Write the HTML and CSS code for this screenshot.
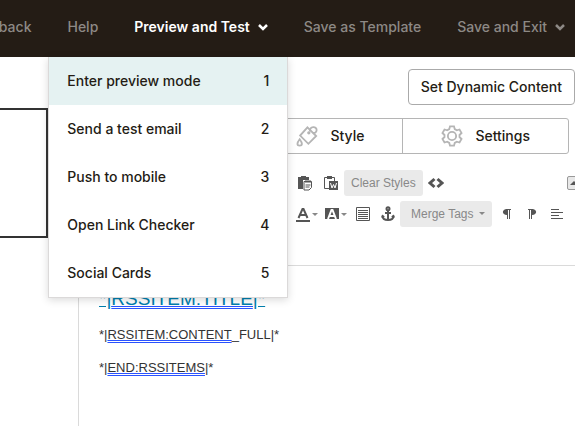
FILE: index.html
```
<!DOCTYPE html>
<html lang="en">
<head>
<meta charset="utf-8">
<title>Campaign editor</title>
<link rel="stylesheet" href="styles.css">
</head>
<body>
<header class="topbar">
  <nav class="topnav" aria-label="Campaign">
    <a class="nav-link" href="#">back</a>
    <a class="nav-link" href="#">Help</a>
    <div class="nav-group">
      <button class="nav-link active" type="button" aria-expanded="true">Preview and Test
        <svg class="chevron" viewBox="0 0 10 8"><path d="M1 2l4 4 4-4"/></svg></button>
      <ul class="menu">
        <li><a class="menu-item current" href="#"><span>Enter preview mode</span><span>1</span></a></li>
        <li><a class="menu-item" href="#"><span>Send a test email</span><span>2</span></a></li>
        <li><a class="menu-item" href="#"><span>Push to mobile</span><span>3</span></a></li>
        <li><a class="menu-item" href="#"><span>Open Link Checker</span><span>4</span></a></li>
        <li><a class="menu-item" href="#"><span>Social Cards</span><span>5</span></a></li>
      </ul>
    </div>
    <a class="nav-link" href="#">Save as Template</a>
    <button class="nav-link" type="button">Save and Exit
      <svg class="chevron" viewBox="0 0 10 8"><path d="M1 2l4 4 4-4"/></svg></button>
  </nav>
</header>
<main class="workspace">
  <section class="canvas" aria-label="Preview"><div class="block"></div></section>
  <section class="editor" aria-label="Content editor">
    <div class="actions"><button class="dynamic" type="button">Set Dynamic Content</button></div>
    <div class="tabs">
      <button class="tab" type="button" aria-label="Content"></button>
      <button class="tab" type="button">
        <svg class="tab-icon" viewBox="0 0 24 24"><path d="M12.500 2.500L22 12l-8.500 8.500L4.500 11.500z"/><path d="M15 7c0-6 7.500-6 7.500-1.500 0 2.500-2 3.500-4 3"/><circle class="dot" cx="14" cy="8.500" r="1.800"/><path d="M4 15.500c-3.500 4.500-3 7 0 7s3.500-2.500 0-7z"/></svg>Style</button>
      <button class="tab" type="button">
        <svg class="tab-icon" viewBox="0 0 24 24"><circle cx="12" cy="12" r="4.500"/><path d="M9.800 1.500h4.400l.8 3 2.200 1.300 3-.9 2.200 3.800-2.200 2.200v2.200l2.200 2.200-2.200 3.800-3-.9-2.200 1.300-.8 3H9.800l-.8-3-2.200-1.300-3 .9-2.200-3.800 2.200-2.200v-2.200L1.600 8.700l2.200-3.800 3 .9L9 4.500z"/></svg>Settings</button>
    </div>
    <div class="toolbar">
      <div class="tools spaced">
        <button class="tool" type="button" aria-label="Paste as text"><svg viewBox="0 0 16 16"><path class="fill" d="M1 2h3V1h5v1h3v3H6v9H1z"/><path d="M7 6.500h7.500v6L12 15H7zM9 5v3M11 5v3M13 5v3M8.500 10h5M8.500 12h4"/></svg></button>
        <button class="tool" type="button" aria-label="Paste from Word"><svg viewBox="0 0 16 16"><path d="M6 13.500H1.500v-11h10V6"/><path class="fill" d="M4 1h5v3H4zM6 6h9v9H6z"/><path class="light" d="M7.500 8l1.500 5 1.500-3.500L12 13l1.500-5"/></svg></button>
        <button class="pill" type="button">Clear Styles</button>
        <button class="tool" type="button" aria-label="Source"><svg viewBox="0 0 16 16"><path class="bold" d="M6.500 4L2 8l4.500 4M9.500 4L14 8l-4.500 4"/></svg></button>
        <button class="collapse" type="button" aria-label="Collapse toolbar"><svg viewBox="0 0 10 8"><path class="fill" d="M1 6l4-4 4 4z"/></svg></button>
      </div>
      <div class="tools">
        <button class="tool wide" type="button" aria-label="Text colour"><svg viewBox="0 0 24 16"><path class="fill" d="M1 14h14v2H1z"/><path class="thick" d="M3.500 12L7.500 3h1l4 9M5.500 9h5.500"/><path class="caret" d="M17 7h6l-3 3z"/></svg></button>
        <button class="tool wide" type="button" aria-label="Background colour"><svg viewBox="0 0 24 16"><path class="fill" d="M1 2h14v11H1z"/><path class="light thick" d="M4 13L7.500 4h1l3.500 9M5.500 10h5"/><path class="caret" d="M17 7h6l-3 3z"/></svg></button>
        <button class="tool" type="button" aria-label="Block style"><svg viewBox="0 0 16 16"><path d="M1.500 1.500h13v13h-13zM3 4.500h10M3 6.500h10M3 8.500h10M3 10.500h10M3 12.500h10"/></svg></button>
        <button class="tool" type="button" aria-label="Anchor"><svg viewBox="0 0 16 16"><circle class="thick" cx="8" cy="2.800" r="1.500"/><path class="thick" d="M8 4.500V14M5 7h6M2.500 9.500c0 3 2 4.500 5.500 4.500s5.500-1.500 5.500-4.500"/><path class="fill" d="M1 11.500l1.500-3L5 11zM15 11.500l-1.500-3L11 11z"/></svg></button>
        <button class="pill merge" type="button">Merge Tags <svg class="small" viewBox="0 0 6 4"><path class="caret" d="M0 0h6L3 3z"/></svg></button>
        <button class="tool" type="button" aria-label="Left to right"><svg viewBox="0 0 16 16"><path class="fill" d="M8 3v6C2.500 9 2.500 3 8 3z"/><path d="M7 3.500h5M8.500 3v10M10.500 3v10"/></svg></button>
        <button class="tool" type="button" aria-label="Right to left"><svg viewBox="0 0 16 16"><path class="fill" d="M8 3v6c5.500 0 5.500-6 0-6z"/><path d="M4 3.500h5M5.500 3v10M7.500 3v10"/></svg></button>
        <button class="tool" type="button" aria-label="Align left"><svg viewBox="0 0 16 16"><path d="M2 3.500h8M2 6.500h12M2 9.500h8M2 12.500h12"/></svg></button>
      </div>
    </div>
    <article class="content">
      <h1><a href="#">*|<span class="spelling">RSSITEM:TITLE</span>|*</a></h1>
      <p>*|<span class="spelling">RSSITEM:CONTENT</span>_FULL|*</p>
      <p>*|<span class="spelling">END:RSSITEMS</span>|*</p>
    </article>
  </section>
</main>
</body>
</html>
```
FILE: styles.css
```
* { box-sizing: border-box; }
body { margin: 0; min-height: 100vh; display: flex; flex-direction: column; font: 500 14px/24px Inter, sans-serif; color: #241c15; background: #fff; overflow: hidden; }
button { font: inherit; color: inherit; background: none; border: 0; padding: 0; }
a { color: inherit; text-decoration: none; }
svg { fill: none; stroke: #555; display: block; flex: none; }

.topbar { background: #241c15; }
.topnav { display: flex; justify-content: flex-end; gap: 36px; height: 57px; padding-right: 10px; white-space: nowrap; }
.nav-link { display: flex; align-items: center; gap: 8px; height: 100%; padding-bottom: 3px; color: #8d8985; }
.nav-link.active { color: #fff; font-weight: 600; }
.chevron { width: 10px; height: 8px; stroke: currentColor; stroke-width: 2.500; }
.nav-group { position: relative; }
.menu { position: absolute; z-index: 2; top: 100%; left: -86px; width: 240px; margin: 0; padding: 0; list-style: none; background: #fff; border: 1px solid #dbd9d9; border-top: 0; box-shadow: 0 2px 8px rgba(0, 0, 0, .15); }
.menu-item { display: flex; justify-content: space-between; padding: 12px 18px; }
.current { background: #e5f2f2; }

.workspace { flex: 1; display: grid; grid-template-columns: 48px 1fr; }
.block { margin-top: 51px; height: 130px; border: 2px solid #333; border-left: 0; }
.editor { display: flex; flex-direction: column; min-width: 0; }
.actions { display: flex; justify-content: flex-end; padding-top: 12px; }
.dynamic { height: 36px; padding: 0 12px; border: 1px solid #aaa; border-radius: 4px; }
.tabs { display: grid; grid-template-columns: 1fr auto auto; margin: 13px 6px 0 30px; border: 1px solid #b5b5b5; border-radius: 3px; }
.tab { display: flex; align-items: center; justify-content: center; gap: 12px; height: 34px; padding: 0 38px; }
.tab + .tab { border-left: 1px solid #b5b5b5; }
.tab-icon { width: 22px; height: 22px; stroke: #b5b5b5; stroke-width: 2; }
.dot { fill: #b5b5b5; stroke: none; }

.toolbar { display: grid; gap: 5px; padding: 16px 0 38px 244px; }
.tools { display: flex; align-items: center; }
.spaced { gap: 1px; }
.tool { display: grid; place-items: center; flex: none; width: 25px; height: 26px; }
.tool svg { width: 16px; height: 16px; }
.wide { width: 29px; }
.wide svg { width: 24px; }
.fill { fill: #555; stroke: none; }
.thick { stroke-width: 2; }
.bold { stroke-width: 3; }
.light { stroke: #fff; }
.caret { fill: #888; stroke: none; }
.pill { display: flex; align-items: center; gap: 6px; flex: none; height: 26px; padding: 0 7px; border-radius: 3px; background: #eaeaea; color: #888; font: 12px/16px "Liberation Sans", sans-serif; }
.merge { padding: 0 7px 0 11px; margin-right: 2px; }
.small { width: 6px; height: 4px; }
.collapse { flex: none; margin-left: auto; margin-right: -6px; padding: 2px 1px; border: 1px solid #999; border-radius: 2px; background: #e8e8e8; }
.collapse svg { width: 10px; height: 8px; }

.content { flex: 1; margin-left: 30px; padding: 20px; border: 1px solid #dadada; border-width: 1px 0 0 1px; color: #333; font: 13px/20px "Liberation Sans", sans-serif; }
.content h1 { margin: 0; font: 19px/26px "Liberation Sans", sans-serif; color: #007ead; }
.content h1 a { text-decoration: underline; }
.content p { margin: 13px 0; }
.spelling { text-decoration: underline double 1px #2a52ff; text-decoration-skip-ink: none; text-underline-offset: 1px; }
```
